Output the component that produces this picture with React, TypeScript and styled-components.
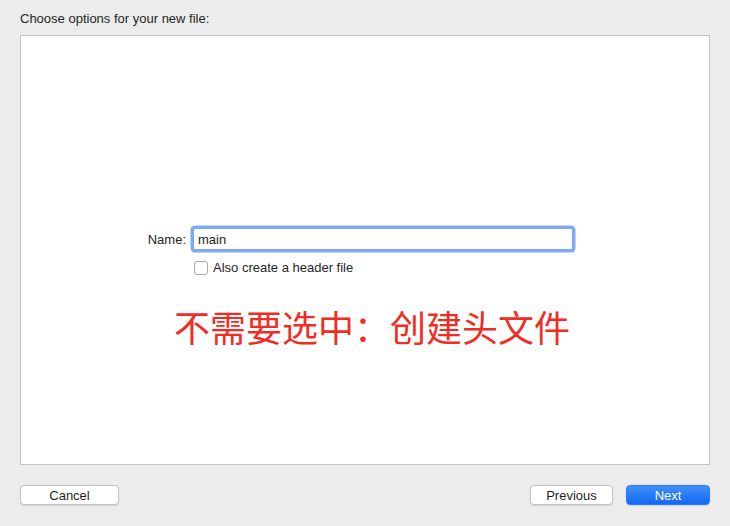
import React, { useState } from "react";
import styled, { createGlobalStyle } from "styled-components";

const GlobalStyle = createGlobalStyle`
  html, body {
    margin: 0;
    padding: 0;
    background: #ececec;
  }
  body {
    font-family: "Liberation Sans", Arial, sans-serif;
    color: #262626;
  }
`;

const Sheet = styled.div`
  width: 730px;
  height: 526px;
  box-sizing: border-box;
  padding: 11px 20px 0;
  display: flex;
  flex-direction: column;
  background: #ececec;
`;

const Title = styled.div`
  font-size: 13px;
  line-height: 16px;
  height: 24px;
  color: #262626;
`;

const Panel = styled.div`
  height: 430px;
  box-sizing: border-box;
  background: #ffffff;
  border: 1px solid #c3c3c3;
  display: flex;
  flex-direction: column;
  padding-top: 192px;
`;

const Form = styled.div`
  align-self: flex-start;
  display: grid;
  grid-template-columns: 165px 380px;
  column-gap: 7px;
  row-gap: 10px;
  align-items: center;
`;

const Label = styled.label`
  font-size: 13px;
  text-align: right;
  color: #262626;
`;

const NameInput = styled.input`
  height: 22px;
  box-sizing: border-box;
  margin: 0;
  padding: 0 4px;
  font-family: "Liberation Sans", Arial, sans-serif;
  font-size: 13px;
  color: #1a1a1a;
  border: 1px solid #7aa7ef;
  border-radius: 2px;
  outline: none;
  box-shadow: 0 0 0 2.5px #7eaaf2;
  caret-color: #000;
`;

const CheckRow = styled.label`
  grid-column: 2;
  display: flex;
  align-items: center;
  gap: 5px;
  font-size: 13px;
  color: #262626;
`;

const Box = styled.span`
  width: 12px;
  height: 12px;
  border: 1px solid #a9a9a9;
  border-radius: 3px;
  background: #fff;
  margin-left: 1px;
`;

const Note = styled.div`
  align-self: center;
  margin-top: 31px;
  font-family: "Noto Sans CJK SC", "Noto Sans", sans-serif;
  font-size: 36px;
  line-height: 40px;
  color: #f12c22;
  margin-left: 14px;
`;

const Footer = styled.div`
  display: flex;
  align-items: center;
  justify-content: space-between;
  margin-top: 20px;
`;

const Group = styled.div`
  display: flex;
  gap: 13px;
`;

const Button = styled.button<{ $primary?: boolean; $w: number }>`
  width: ${(p) => p.$w}px;
  height: 20px;
  margin: 0;
  padding: 0;
  font-family: "Liberation Sans", Arial, sans-serif;
  font-size: 13px;
  border-radius: 4px;
  color: ${(p) => (p.$primary ? "#ffffff" : "#1f1f1f")};
  background: ${(p) =>
    p.$primary ? "linear-gradient(#3f8ef9, #1469f6)" : "#ffffff"};
  border: 1px solid ${(p) => (p.$primary ? "#2a78f5" : "#c4c4c4")};
  box-shadow: 0 0.5px 1px rgba(0, 0, 0, 0.12);
`;

export default function App() {
  const [name, setName] = useState("main");
  return (
    <>
      <GlobalStyle />
      <Sheet>
        <Title>Choose options for your new file:</Title>
        <Panel>
          <Form>
            <Label htmlFor="name">Name:</Label>
            <NameInput
              id="name"
              value={name}
              onChange={(e) => setName(e.target.value)}
              autoFocus
            />
            <CheckRow>
              <Box />
              Also create a header file
            </CheckRow>
          </Form>
          <Note>不需要选中：创建头文件</Note>
        </Panel>
        <Footer>
          <Button $w={99}>Cancel</Button>
          <Group>
            <Button $w={83}>Previous</Button>
            <Button $w={84} $primary>
              Next
            </Button>
          </Group>
        </Footer>
      </Sheet>
    </>
  );
}
